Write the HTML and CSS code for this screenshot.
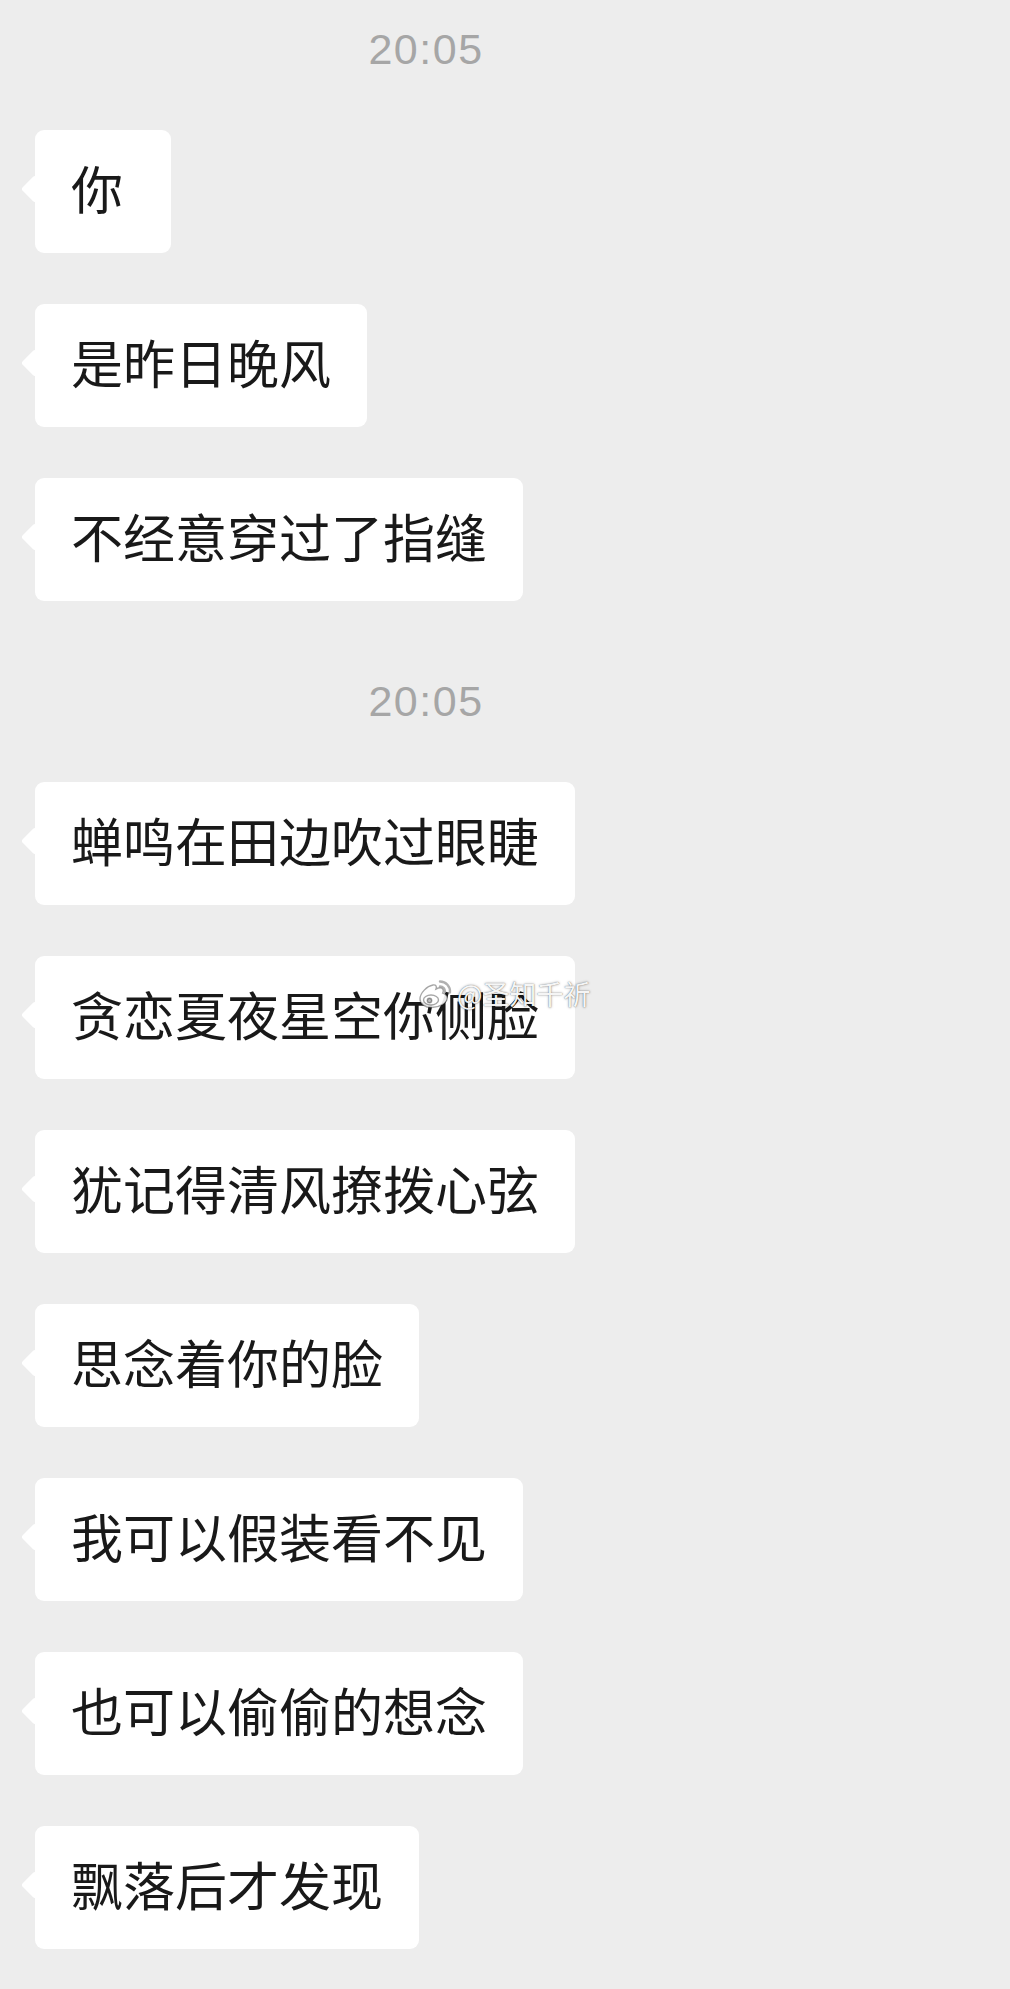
FILE: index.html
```html
<!DOCTYPE html>
<html lang="zh-cn">
<head>
    <meta charset="utf-8">
    <meta name="viewport" content="width=device-width, initial-scale=1.0">
    <title>聊天记录</title>
    <link rel="stylesheet" href="styles.css">
</head>
<body>
    <div class="chat">
        <div class="time">20:05</div>
        <div class="msg msg-first">你</div>
        <div class="msg">是昨日晚风</div>
        <div class="msg">不经意穿过了指缝</div>

        <div class="time">20:05</div>
        <div class="msg">蝉鸣在田边吹过眼睫</div>
        <div class="msg">贪恋夏夜星空你侧脸</div>
        <div class="msg">犹记得清风撩拨心弦</div>
        <div class="msg">思念着你的脸</div>
        <div class="msg">我可以假装看不见</div>
        <div class="msg">也可以偷偷的想念</div>
        <div class="msg">飘落后才发现</div>
    </div>

    <!-- 水印 -->
    <div class="watermark">
        <svg class="wb-logo" viewBox="0 0 38 32" width="38" height="32">
            <path d="M4 21c0-6 7-13 13-14 3-.5 4 1.5 3 4 3-1.5 6-1.5 7 .5.6 1.2.3 2.5-.3 3.5 3 1 4.5 2.5 4.5 5 0 5-7.5 9.5-15.5 9.5C9 29.5 4 26 4 21z" />
            <ellipse cx="15" cy="22" rx="7.5" ry="5" />
            <circle cx="13.5" cy="22.5" r="2.2" class="pupil" />
            <path class="wave" d="M24 3.5a10 10 0 0 1 10 11" />
            <path class="wave" d="M24 8.5a5 5 0 0 1 5 5.5" />
        </svg>
        <span>@圣知千祈</span>
    </div>
</body>
</html>
```

FILE: styles.css
```css
body {
    margin: 0;
    padding: 0;
    background-color: #ededed;
    font-family: "Noto Sans CJK SC", "Noto Sans", sans-serif;
    position: relative;
}

.chat {
    display: flex;
    flex-direction: column;
    align-items: flex-start;
    padding: 24px 0 40px;
}

.time {
    width: 852px;
    height: 50px;
    margin: 0 0 56px;
    line-height: 50px;
    text-align: center;
    font-family: "Liberation Sans", Arial, sans-serif;
    font-size: 43px;
    letter-spacing: 1.5px;
    color: #a6a6a6;
}

.msg + .time {
    margin-top: 24px;
}

.msg {
    position: relative;
    box-sizing: border-box;
    margin: 0 0 51px 35px;
    padding: 22px 36px 30px;
    background-color: #fff;
    border-radius: 9px;
    font-size: 52px;
    line-height: 71px;
    color: #191919;
    white-space: nowrap;
}

.msg-first {
    min-width: 136px;
}

/* 气泡的小尖角 */
.msg::before {
    content: "";
    position: absolute;
    left: -10px;
    top: 49px;
    width: 20px;
    height: 20px;
    background-color: #fff;
    border-radius: 3px;
    transform: rotate(45deg);
}

.watermark {
    position: absolute;
    left: 416px;
    top: 974px;
    display: flex;
    align-items: center;
    gap: 3px;
    font-size: 27px;
    color: rgba(255, 255, 255, 0.95);
    text-shadow: 0 0 1px rgba(0, 0, 0, 0.55), 0 0 3px rgba(0, 0, 0, 0.3);
}

.wb-logo {
    fill: rgba(255, 255, 255, 0.9);
    stroke: rgba(0, 0, 0, 0.35);
    stroke-width: 1.4;
}

.wb-logo .pupil {
    fill: rgba(0, 0, 0, 0.25);
}

.wb-logo .wave {
    fill: none;
    stroke: rgba(150, 150, 150, 0.75);
    stroke-width: 2.4;
    stroke-linecap: round;
}
```
